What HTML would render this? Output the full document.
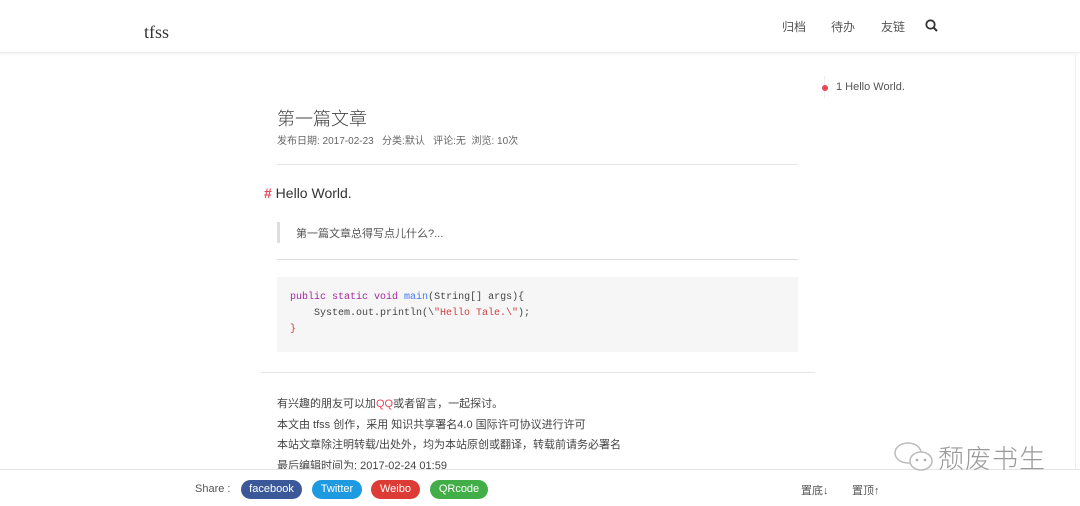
<!DOCTYPE html>
<html><head><meta charset="utf-8"><style>
*{margin:0;padding:0;box-sizing:border-box}
body{width:1080px;height:506px;overflow:hidden;background:#fff;font-family:"Liberation Sans","Noto Sans CJK SC",sans-serif;color:#333;position:relative}
.hdr{position:absolute;left:0;top:0;width:1080px;height:53px;background:#fff;border-bottom:1px solid #eee;box-shadow:0 1px 3px rgba(0,0,0,.06)}
.logo{position:absolute;left:144px;top:22px;font-family:"Liberation Serif",serif;font-size:18px;color:#333}
.nav{position:absolute;top:18px;font-size:12px;color:#555}
.t{position:absolute;font-size:12px;color:#555}
.hr{position:absolute;height:1px;background:#e5e5e5}
.code{position:absolute;left:277px;top:277px;width:521px;height:75px;background:#f6f6f6;font-family:"Liberation Mono",monospace;font-size:10px;line-height:16px;padding:13px 0 0 13px;color:#444;white-space:pre}
.btn{position:absolute;top:480px;height:19px;border-radius:10px;color:#fff;font-size:11px;line-height:19px;text-align:center;font-family:"Liberation Sans",sans-serif}
</style></head><body>
<div class="hdr"></div>
<div class="logo">tfss</div>
<div class="nav" style="left:782px">归档</div>
<div class="nav" style="left:831px">待办</div>
<div class="nav" style="left:881px">友链</div>
<svg style="position:absolute;left:925px;top:19px" width="13" height="13" viewBox="0 0 13 13"><circle cx="5.5" cy="5.5" r="4.2" fill="none" stroke="#333" stroke-width="1.8"/><line x1="8.5" y1="8.5" x2="12" y2="12" stroke="#333" stroke-width="2"/></svg>
<div style="position:absolute;left:824px;top:76px;width:1px;height:22px;background:#eee"></div>
<div style="position:absolute;left:822px;top:85px;width:6px;height:6px;border-radius:50%;background:#e8455a"></div>
<div class="t" style="left:836px;top:81px;font-size:11px">1 Hello World.</div>
<div style="position:absolute;left:1075px;top:55px;width:1px;height:451px;background:#eee"></div>

<div style="position:absolute;left:277px;top:105px;font-size:18px;color:#444;font-weight:300">第一篇文章</div>
<div class="t" style="left:277px;top:132px;font-size:10px;color:#666">发布日期: 2017-02-23 &nbsp; 分类:默认 &nbsp; 评论:无 &nbsp;浏览: 10次</div>
<div class="hr" style="left:277px;top:164px;width:521px"></div>
<div style="position:absolute;left:264px;top:185px;font-size:14px;color:#333"><span style="color:#e8455a;font-weight:bold">#</span> Hello World.</div>
<div style="position:absolute;left:277px;top:222px;width:3px;height:21px;background:#ddd"></div>
<div class="t" style="left:296px;top:225px;font-size:11px">第一篇文章总得写点儿什么?...</div>
<div class="hr" style="left:277px;top:259px;width:521px;background:#ddd"></div>
<div class="code"><span style="color:#a626a4">public static void</span> <span style="color:#4078f2">main</span>(String[] args){
    System.out.println(\<span style="color:#d03d3d">"Hello Tale.\"</span>);
<span style="color:#d03d3d">}</span></div>
<div class="hr" style="left:261px;top:372px;width:554px"></div>
<div class="t" style="left:277px;top:394px;font-size:11px;line-height:20.5px;color:#444">有兴趣的朋友可以加<span style="color:#e8455a">QQ</span>或者留言，一起探讨。<br>本文由 tfss 创作，采用 知识共享署名4.0 国际许可协议进行许可<br>本站文章除注明转载/出处外，均为本站原创或翻译，转载前请务必署名<br>最后编辑时间为: 2017-02-24 01:59</div>
<div style="position:absolute;left:0;top:469px;width:1080px;height:37px;background:#fff;border-top:1px solid #e5e5e5"></div>
<div class="t" style="left:195px;top:483px;font-size:11px">Share :</div>
<div class="btn" style="left:241px;width:61px;background:#3b5998">facebook</div>
<div class="btn" style="left:312px;width:50px;background:#1e9be0">Twitter</div>
<div class="btn" style="left:371px;width:49px;background:#dd3c36">Weibo</div>
<div class="btn" style="left:430px;width:58px;background:#41ae48">QRcode</div>
<div class="t" style="left:801px;top:482px;font-size:11px">置底↓</div>
<div class="t" style="left:852px;top:482px;font-size:11px">置顶↑</div>
<svg style="position:absolute;left:893px;top:440px" width="44" height="36" viewBox="0 0 44 36"><ellipse cx="15" cy="13" rx="13" ry="10" fill="#fff" stroke="#bbb" stroke-width="1.5"/><ellipse cx="28" cy="21" rx="11" ry="9" fill="#fff" stroke="#bbb" stroke-width="1.5"/><circle cx="24" cy="20" r="1.3" fill="#aaa"/><circle cx="32" cy="20" r="1.3" fill="#aaa"/></svg>
<div style="position:absolute;left:938px;top:439px;font-size:26px;color:#999;letter-spacing:1px;text-shadow:0 0 2px #fff;font-family:'Noto Sans CJK SC',sans-serif;font-weight:300">颓废书生</div>
</body></html>
